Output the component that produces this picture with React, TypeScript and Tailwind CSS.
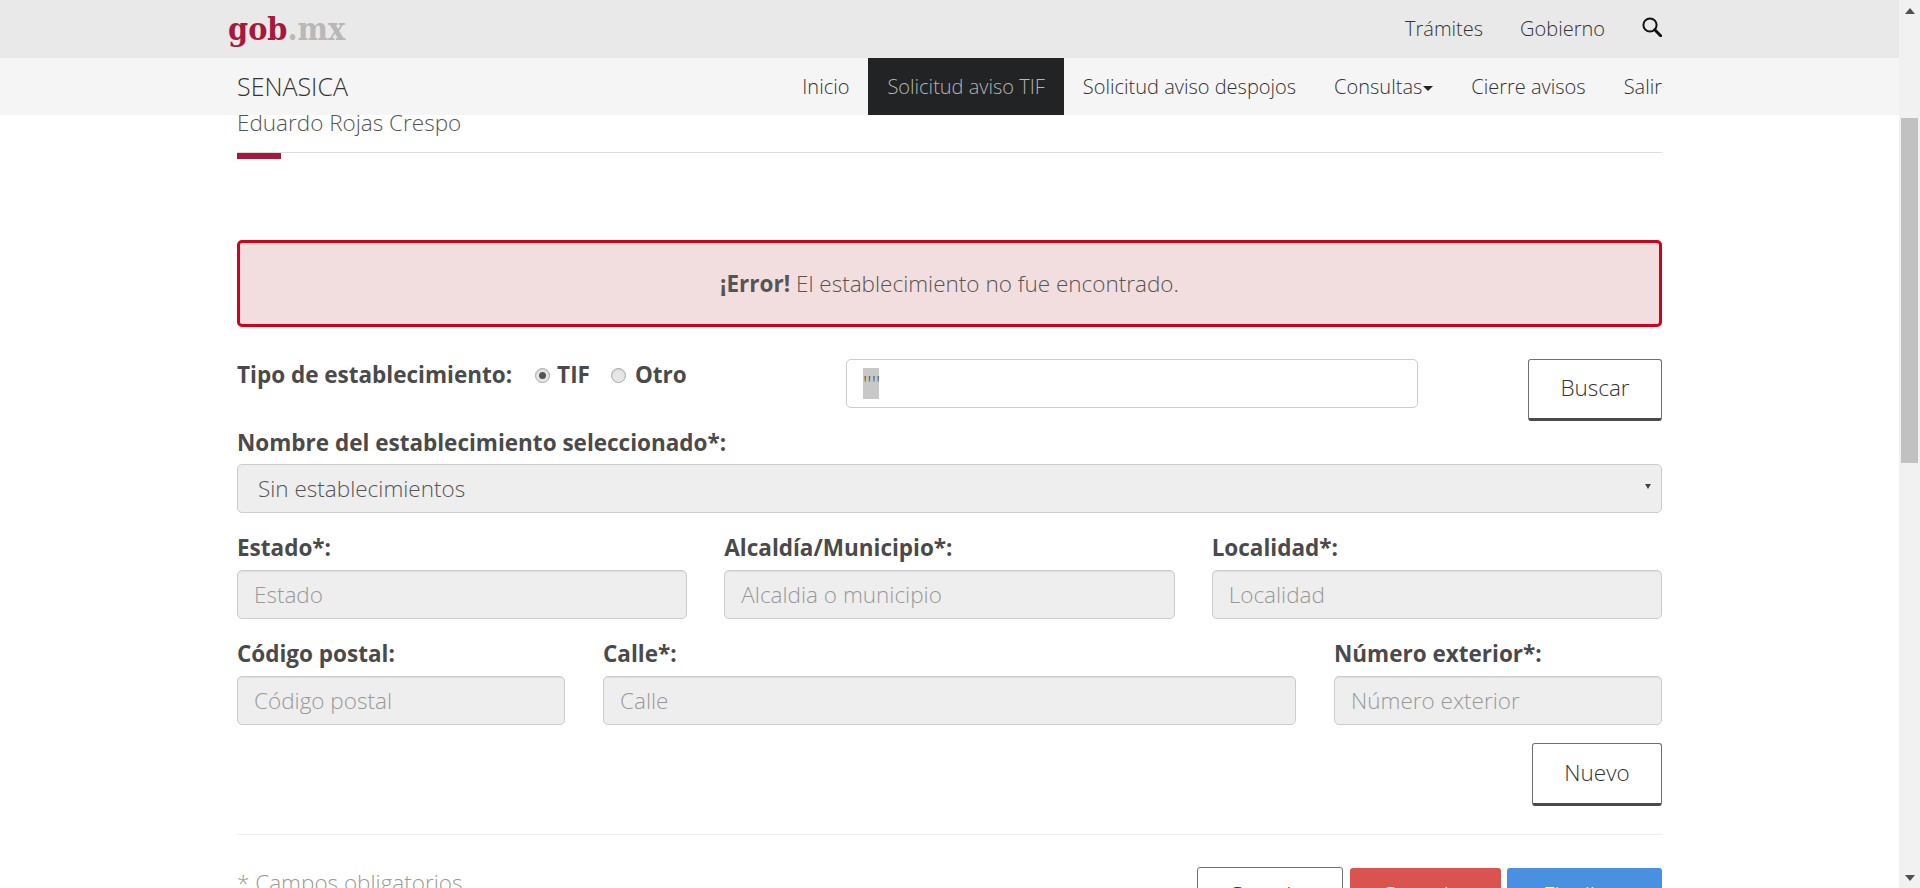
const FONT = "font-['Open_Sans',sans-serif]";

function SearchIcon() {
    return (
        <svg width="20" height="20" viewBox="0 0 20 20" fill="none" stroke="#111" strokeWidth="2">
            <circle cx="8" cy="8" r="6.6" />
            <path d="M12.8 12.8 L18.6 18.8" strokeWidth="3" strokeLinecap="round" />
        </svg>
    );
}

function Radio({ checked }: { checked?: boolean }) {
    return (
        <span className="flex h-[15px] w-[15px] items-center justify-center rounded-full border border-[#a9a9a9] bg-[#e6e6e6] shadow-[inset_0_1px_1px_rgba(0,0,0,0.1)]">
            {checked && <span className="h-[7px] w-[7px] rounded-full bg-[#555]" />}
        </span>
    );
}

function Field({ label, placeholder, className }: { label: string; placeholder: string; className: string }) {
    return (
        <div className={className}>
            <label className="block h-[25px] text-[22.5px] leading-[25px] font-bold text-[#4a4a4a]">{label}</label>
            <div className="mt-[10px] h-[49px] rounded-[5px] border border-[#ccc] bg-[#eee] pl-4 text-[22.5px] leading-[47px] font-light text-[#999] shadow-[inset_0_1px_1px_rgba(0,0,0,0.075)]">
                {placeholder}
            </div>
        </div>
    );
}

function NavLink({ children, active }: { children: React.ReactNode; active?: boolean }) {
    return (
        <a className={`flex h-[57px] items-center px-[19px] text-[20px] font-light ${active ? 'bg-[#212325] text-[#b5b5b5]' : 'text-[#333]'}`}>
            {children}
        </a>
    );
}

export default function App() {
    return (
        <div className={`flex h-[888px] overflow-hidden bg-white ${FONT}`}>
            <div className="relative h-full min-w-0 flex-1 overflow-hidden">
                <header className="absolute inset-x-0 top-0 z-10">
                    <div className="h-[58px] bg-[#e9e9e9]">
                        <div className="mx-auto flex h-full w-[1425px] items-center justify-between">
                            <div className="-ml-[9px] font-['DejaVu_Serif_Condensed','DejaVu_Serif',serif] text-[32px] leading-none font-bold">
                                <span className="text-[#a6193f]">gob</span>
                                <span className="text-[#b8b8b8]">.mx</span>
                            </div>
                            <div className="flex items-center text-[20px] font-light text-[#333]">
                                <span>Trámites</span>
                                <span className="ml-[37px]">Gobierno</span>
                                <span className="-mt-[5px] ml-[37px]"><SearchIcon /></span>
                            </div>
                        </div>
                    </div>
                    <div className="h-[57px] bg-[#f5f5f5]">
                        <div className="mx-auto flex h-full w-[1425px] items-center justify-between">
                            <span className="text-[25px] font-light text-[#333]">SENASICA</span>
                            <nav className="-mr-[19px] flex">
                                <NavLink>Inicio</NavLink>
                                <NavLink active>Solicitud aviso TIF</NavLink>
                                <NavLink>Solicitud aviso despojos</NavLink>
                                <NavLink>
                                    Consultas
                                    <span className="mt-[3px] ml-px h-0 w-0 border-x-[5px] border-t-[5px] border-x-transparent border-t-[#222]" />
                                </NavLink>
                                <NavLink>Cierre avisos</NavLink>
                                <NavLink>Salir</NavLink>
                            </nav>
                        </div>
                    </div>
                </header>

                <main className="mx-auto w-[1425px] pt-[106px] text-[#4a4a4a]">
                    <div className="relative h-[47px] border-b border-[#ddd] pt-[1px] text-[22.5px] leading-[32px] font-light text-[#555]">
                        Eduardo Rojas Crespo
                        <span className="absolute -bottom-[7px] left-0 h-[6px] w-[44px] bg-[#a6193f]" />
                    </div>

                    <div className="mt-[87px] flex h-[87px] items-center justify-center rounded-[5px] border-[3px] border-[#d0021b] bg-[#f2dede] text-[22.5px] font-light text-[#555]">
                        <span><b className="font-bold">¡Error!</b> El establecimiento no fue encontrado.</span>
                    </div>

                    <div className="mt-[32px] flex items-start">
                        <div className="flex h-[32px] w-[609px] items-center text-[22.5px] font-bold">
                            <span>Tipo de establecimiento:</span>
                            <span className="mr-[7px] ml-[23px]"><Radio checked /></span>
                            <span>TIF</span>
                            <span className="mr-[9px] ml-[21px]"><Radio /></span>
                            <span>Otro</span>
                        </div>
                        <div className="h-[49px] w-[572px] rounded-[5px] border border-[#ccc] bg-white">
                            <div className="mt-[8px] ml-[16px] h-[31px] w-[16px] bg-[#c8c8c8] text-[22.5px] leading-[31px] font-light text-[#555]">
                                ''''
                            </div>
                        </div>
                        <button className="ml-auto h-[62px] w-[134px] rounded-[3px] border border-b-[3px] border-[#6f6f6f] border-b-[#4a4a4a] bg-white pb-[2px] text-[22.5px] font-light text-[#333]">
                            Buscar
                        </button>
                    </div>

                    <label className="mt-[9px] block h-[25px] text-[22.5px] leading-[25px] font-bold">Nombre del establecimiento seleccionado*:</label>
                    <div className="relative mt-[9px] h-[49px] rounded-[5px] border border-[#ccc] bg-[#eee] pl-[20px] text-[22.5px] leading-[48px] font-light text-[#555]">
                        Sin establecimientos
                        <span className="absolute top-[19px] right-[10px] h-0 w-0 border-x-[3px] border-t-[5px] border-x-transparent border-t-[#444]" />
                    </div>

                    <div className="mt-[22px] flex gap-[37px]">
                        <Field className="flex-1" label="Estado*:" placeholder="Estado" />
                        <Field className="flex-1" label="Alcaldía/Municipio*:" placeholder="Alcaldia o municipio" />
                        <Field className="flex-1" label="Localidad*:" placeholder="Localidad" />
                    </div>

                    <div className="mt-[22px] flex gap-[38px]">
                        <Field className="w-[328px]" label="Código postal:" placeholder="Código postal" />
                        <Field className="flex-1" label="Calle*:" placeholder="Calle" />
                        <Field className="w-[328px]" label="Número exterior*:" placeholder="Número exterior" />
                    </div>

                    <div className="mt-[18px] flex justify-end">
                        <button className="h-[63px] w-[130px] rounded-[3px] border border-b-[3px] border-[#6f6f6f] border-b-[#4a4a4a] bg-white pb-[2px] text-[22.5px] font-light text-[#333]">
                            Nuevo
                        </button>
                    </div>

                    <div className="mt-[28px] border-t border-[#eee]" />

                    <div className="mt-[32px] flex items-start justify-between">
                        <span className="-mt-[1px] text-[22.5px] font-light text-[#999]">* Campos obligatorios</span>
                        <div className="flex">
                            <button className="h-[63px] w-[146px] rounded-[3px] border border-[#6f6f6f] bg-white pb-[7px] text-[22.5px] font-light text-[#333]">Guardar</button>
                            <button className="mt-px ml-[7px] h-[62px] w-[151px] rounded-[3px] bg-[#d9534f] pb-[8px] text-[22.5px] font-light text-white">Cancelar</button>
                            <button className="mt-px ml-[6px] h-[62px] w-[155px] rounded-[3px] bg-[#4a90e2] pb-[8px] text-[22.5px] font-light text-white">Finalizar</button>
                        </div>
                    </div>
                </main>
            </div>

            <aside className="flex h-full w-[21px] shrink-0 flex-col bg-[#f1f1f1]">
                <div className="flex h-[21px] items-center justify-center">
                    <span className="h-0 w-0 border-x-[5px] border-b-[6px] border-x-transparent border-b-[#505050]" />
                </div>
                <div className="mx-[2px] mt-[97px] h-[345px] bg-[#c1c1c1]" />
                <div className="mt-auto flex h-[21px] items-center justify-center">
                    <span className="h-0 w-0 border-x-[5px] border-t-[6px] border-x-transparent border-t-[#505050]" />
                </div>
            </aside>
        </div>
    );
}
